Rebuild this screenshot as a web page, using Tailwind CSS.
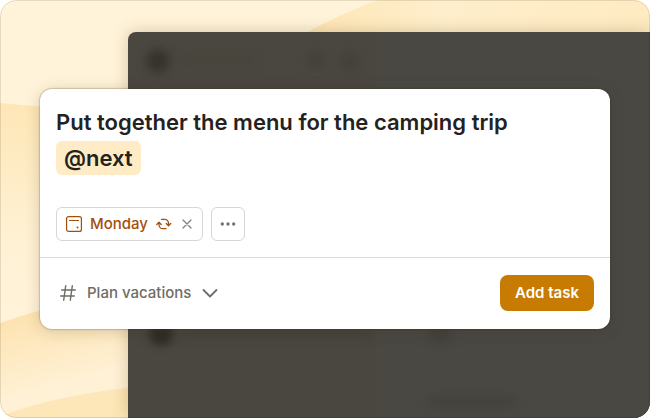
<!DOCTYPE html>
<html lang="en">
<head>
    <meta charset="UTF-8">
    <meta name="viewport" content="width=device-width, initial-scale=1.0">
    <title>Add task</title>
    <script src="https://cdn.jsdelivr.net/npm/@tailwindcss/browser@4"></script>
</head>
<body class="bg-white font-['Inter',sans-serif] antialiased">

    <main class="relative isolate min-h-screen overflow-hidden rounded-2xl bg-[#fff3d9] px-10 pt-[89px] pb-[89px]">

        <!-- Backdrop waves -->
        <svg class="absolute inset-0 -z-20 h-full w-full" viewBox="0 0 650 418" preserveAspectRatio="none" aria-hidden="true">
            <defs>
                <linearGradient id="wave-left" x1="0" y1="0" x2="0" y2="1">
                    <stop offset="0" stop-color="#fee6b6" />
                    <stop offset="0.6" stop-color="#fff1d3" />
                    <stop offset="1" stop-color="#fff3d9" />
                </linearGradient>
                <linearGradient id="wave-bottom" x1="0" y1="0" x2="0.3" y2="1">
                    <stop offset="0.2" stop-color="#fde2af" />
                    <stop offset="0.8" stop-color="#fff1d5" />
                </linearGradient>
                <linearGradient id="wave-top" x1="0" y1="0" x2="1" y2="0">
                    <stop offset="0" stop-color="#fee6b4" />
                    <stop offset="0.4" stop-color="#feeecb" />
                    <stop offset="1" stop-color="#feebc2" />
                </linearGradient>
            </defs>
            <path d="M0 103Q70 111 140 104V290L0 323Z" fill="url(#wave-left)" />
            <path d="M0 323Q60 302 140 290V418H0Z" fill="url(#wave-bottom)" />
            <path d="M6 414Q60 395 140 386V418H6Z" fill="#fde6b7" />
            <path d="M300 36Q340 14 378 0H650V36Z" fill="url(#wave-top)" />
        </svg>

        <!-- Dimmed app window behind the dialog -->
        <div class="absolute top-8 right-0 bottom-0 left-32 -z-10 overflow-hidden rounded-tl-lg bg-[#4a4741] shadow-[0_0_16px_rgba(90,65,15,0.25)]" aria-hidden="true">
            <div class="absolute inset-y-0 right-0 left-[248px] bg-[#494843]"></div>
            <div class="absolute top-[17px] left-[18px] size-6 rounded-full bg-[#37322c] blur-[5px]"></div>
            <div class="absolute top-[24px] left-[52px] h-2 w-[76px] rounded-full bg-[#474339] blur-[5px]"></div>
            <div class="absolute top-[20px] left-[180px] size-4 rounded-full bg-[#433f39] blur-[5px]"></div>
            <div class="absolute top-[20px] left-[212px] size-5 rounded-full bg-[#44403a] blur-[5px]"></div>
            <div class="absolute top-[290px] left-[21px] size-6 rounded-full bg-[#302b25] blur-[4px]"></div>
            <div class="absolute top-[298px] left-[52px] h-2 w-48 rounded-full bg-[#45413b] blur-[5px]"></div>
            <div class="absolute top-[288px] left-[300px] size-6 rounded-full bg-[#44413c] blur-[4px]"></div>
            <div class="absolute top-[366px] left-[300px] h-2 w-[88px] rounded-full bg-[#44413c] blur-[4px]"></div>
        </div>

        <form class="rounded-xl bg-white shadow-[0_0_1px_1px_rgba(60,45,15,0.2),0_2px_16px_rgba(60,45,15,0.2)]">
            <div class="px-4 pt-[15px] pb-4">
                <div role="textbox" contenteditable="true" aria-label="Task name" class="text-[22px] leading-9 font-semibold text-[#25221e] outline-none">
                    <p>Put together the menu for the camping trip</p>
                    <p><span class="rounded-md bg-[#ffecc7] px-2 py-1">@next</span></p>
                </div>

                <div class="mt-[31px] flex gap-2">
                    <div class="flex h-[34px] items-center rounded-md border border-[#d6d6d6] text-[#a34f0a]">
                        <button type="button" class="flex items-center gap-2 pl-[9px] text-[15px] leading-5 font-medium">
                            <svg class="size-4" viewBox="0 0 16 16" fill="none" stroke="currentColor" aria-hidden="true">
                                <rect x="0.6" y="0.6" width="14.8" height="14.8" rx="2" stroke-width="1.2" />
                                <path d="M3 4.5h10" stroke-width="1.2" />
                                <circle cx="11.5" cy="11.5" r="1" fill="currentColor" stroke="none" />
                            </svg>
                            Monday
                            <svg class="size-4" viewBox="0 0 16 16" fill="none" stroke="currentColor" stroke-width="1.3" stroke-linecap="round" stroke-linejoin="round" aria-hidden="true">
                                <path d="M5.500 3.300H8.500a4 4 0 0 1 4 4V9.300" />
                                <path d="M10.300 7.500l2.200 2.200 2.200-2.200" />
                                <path d="M10 12.700H7a4 4 0 0 1-4-4V6.700" />
                                <path d="M0.800 8.500L3 6.300l2.200 2.200" />
                            </svg>
                        </button>
                        <button type="button" aria-label="Remove date" class="px-[7px] text-[#808080]">
                            <svg class="size-4" viewBox="0 0 16 16" fill="none" stroke="currentColor" stroke-width="1.3" stroke-linecap="round" aria-hidden="true">
                                <path d="M4 4l8 8M12 4l-8 8" />
                            </svg>
                        </button>
                    </div>
                    <button type="button" aria-label="More actions" class="flex size-[34px] items-center justify-center rounded-md border border-[#d6d6d6] text-[#757575]">
                        <svg class="size-4" viewBox="0 0 16 16" fill="currentColor" aria-hidden="true">
                            <circle cx="2.300" cy="8" r="1.700" />
                            <circle cx="8" cy="8" r="1.700" />
                            <circle cx="13.700" cy="8" r="1.700" />
                        </svg>
                    </button>
                </div>
            </div>

            <div class="flex items-center justify-between border-t border-[#d9d9d9] px-4 pt-[17px] pb-[18px]">
                <div class="relative flex items-center text-[#6f6c66]">
                    <label for="project" class="px-1" aria-label="Project">
                        <svg class="size-4" viewBox="0 0 16 16" fill="none" stroke="currentColor" stroke-width="1.4" stroke-linecap="round" aria-hidden="true">
                            <path d="M5.700 0.800L3.700 15.200M12.300 0.800L10.300 15.200M1.700 5H15.300M0.700 11H14.300" />
                        </svg>
                    </label>
                    <select id="project" class="field-sizing-content appearance-none bg-transparent pr-[31px] pl-[7px] text-[15px] leading-5 font-medium">
                        <option>Plan vacations</option>
                    </select>
                    <svg class="pointer-events-none absolute right-1 size-4" viewBox="0 0 16 16" fill="none" stroke="currentColor" stroke-width="1.800" stroke-linecap="round" stroke-linejoin="round" aria-hidden="true">
                        <path d="M1.500 5L8 11.500 14.500 5" />
                    </svg>
                </div>
                <button type="submit" class="h-9 rounded-lg bg-[#c77b02] px-[15px] text-[15px] leading-5 font-semibold text-white">Add task</button>
            </div>
        </form>

        <div class="pointer-events-none absolute inset-0 rounded-2xl border border-black/10" aria-hidden="true"></div>
    </main>

</body>
</html>
